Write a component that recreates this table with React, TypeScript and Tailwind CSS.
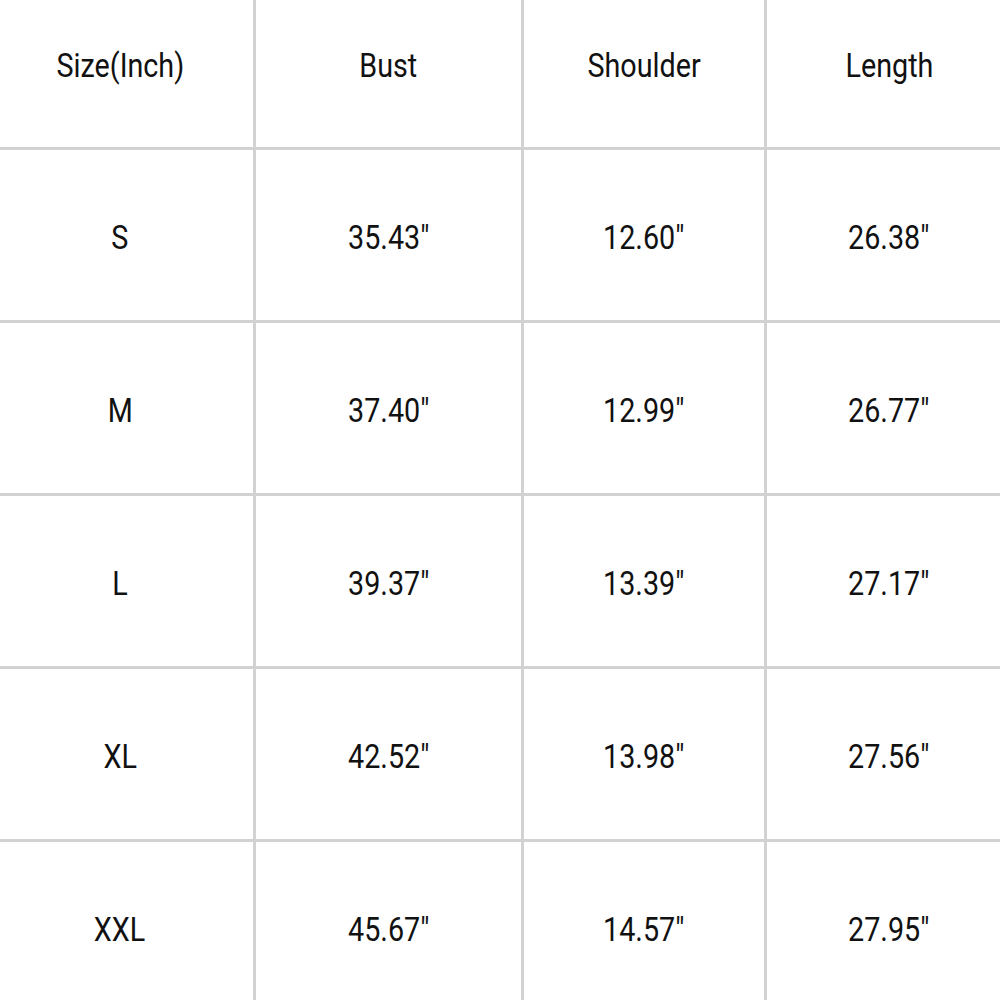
const headers = ["Size(Inch)", "Bust", "Shoulder", "Length"];

const rows = [
  ["S", '35.43"', '12.60"', '26.38"'],
  ["M", '37.40"', '12.99"', '26.77"'],
  ["L", '39.37"', '13.39"', '27.17"'],
  ["XL", '42.52"', '13.98"', '27.56"'],
  ["XXL", '45.67"', '14.57"', '27.95"'],
];

function Cell({ text, header }: { text: string; header?: boolean }) {
  return (
    <div className={`flex items-center justify-center bg-white ${header ? "pb-[17px]" : "pt-[5px]"}`}>
      <span className="inline-block scale-x-[0.87] text-[33px] leading-none text-[#111]">{text}</span>
    </div>
  );
}

export default function App() {
  return (
    <div className="h-[1000px] w-[1000px] overflow-hidden bg-white" style={{ fontFamily: "Roboto, 'Liberation Sans', sans-serif" }}>
      <div className="ml-[-13px] grid w-[1026px] grid-cols-[266px_265px_240px_244px] grid-rows-[147px_170px_170px_170px_170px_170px] gap-[3px] bg-[#d2d2d2]">
        {headers.map((h) => (
          <Cell key={h} text={h} header />
        ))}
        {rows.map((row) => row.map((v, i) => <Cell key={row[0] + i} text={v} />))}
      </div>
    </div>
  );
}
